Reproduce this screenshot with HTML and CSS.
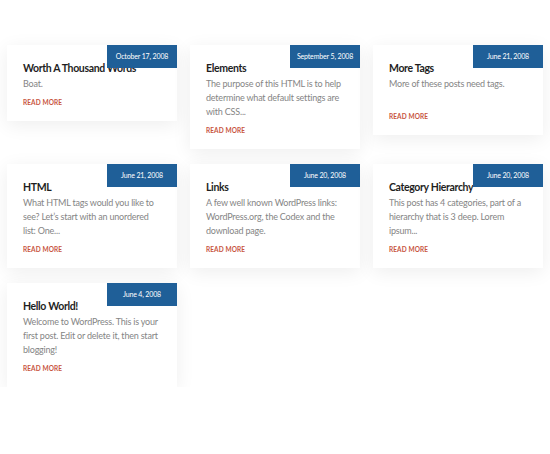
FILE: index.html
```html
<!DOCTYPE HTML>
<html>
  <head>
    <title>Blog</title>
    <meta charset="utf-8" />
    <link rel="stylesheet" href="styles.css">
  </head>
  <body>
    <div class="posts">
      <div class="post">
        <span class="date">October 17, 2008</span>
        <h3>Worth A Thousand Words</h3>
        <p>Boat.</p>
        <a class="more" href="#">Read more</a>
      </div>
      <div class="post">
        <span class="date">September 5, 2008</span>
        <h3>Elements</h3>
        <p>The purpose of this HTML is to help determine what default settings are with CSS...</p>
        <a class="more" href="#">Read more</a>
      </div>
      <div class="post">
        <span class="date">June 21, 2008</span>
        <h3>More Tags</h3>
        <p>More of these posts need tags.<br />&nbsp;</p>
        <a class="more" href="#">Read more</a>
      </div>
      <div class="post">
        <span class="date">June 21, 2008</span>
        <h3>HTML</h3>
        <p>What HTML tags would you like to see? Let’s start with an unordered list: One...</p>
        <a class="more" href="#">Read more</a>
      </div>
      <div class="post">
        <span class="date">June 20, 2008</span>
        <h3>Links</h3>
        <p>A few well known WordPress links: WordPress.org, the Codex and the download page.</p>
        <a class="more" href="#">Read more</a>
      </div>
      <div class="post">
        <span class="date">June 20, 2008</span>
        <h3>Category Hierarchy</h3>
        <p>This post has 4 categories, part of a hierarchy that is 3 deep. Lorem ipsum...</p>
        <a class="more" href="#">Read more</a>
      </div>
      <div class="post">
        <span class="date">June 4, 2008</span>
        <h3>Hello World!</h3>
        <p>Welcome to WordPress. This is your first post. Edit or delete it, then start blogging!</p>
        <a class="more" href="#">Read more</a>
      </div>
    </div>
  </body>
</html>
```

FILE: styles.css
```css
*{
  margin:0;
  padding:0;
}
body{
  background:#fff;
  font-family:Lato, "Open Sans", sans-serif;
}
.posts{
  display:grid;
  grid-template-columns:repeat(3, 170px);
  column-gap:13px;
  row-gap:15px;
  align-items:start;
  padding:45px 7px 0;
}
.post{
  position:relative;
  background:#fff;
  padding:16px 16px 13px;
  box-shadow:0 4px 18px rgba(0,0,0,0.07);
}
.date{
  position:absolute;
  top:0;
  right:0;
  width:70px;
  height:23px;
  line-height:23px;
  text-align:center;
  background:#1f5f98;
  color:#fff;
  font-size:7px;
  letter-spacing:-0.15px;
}
.post h3{
  font-size:10.5px;
  line-height:14px;
  font-weight:700;
  color:#1e1e1e;
  letter-spacing:-0.35px;
  margin-bottom:2px;
}
.post p{
  font-size:9px;
  line-height:14px;
  color:#858585;
  letter-spacing:-0.2px;
  margin-bottom:7px;
}
.more{
  display:block;
  font-size:6.5px;
  line-height:10px;
  font-weight:700;
  text-transform:uppercase;
  text-decoration:none;
  letter-spacing:0.1px;
  color:#c8553f;
}
```
